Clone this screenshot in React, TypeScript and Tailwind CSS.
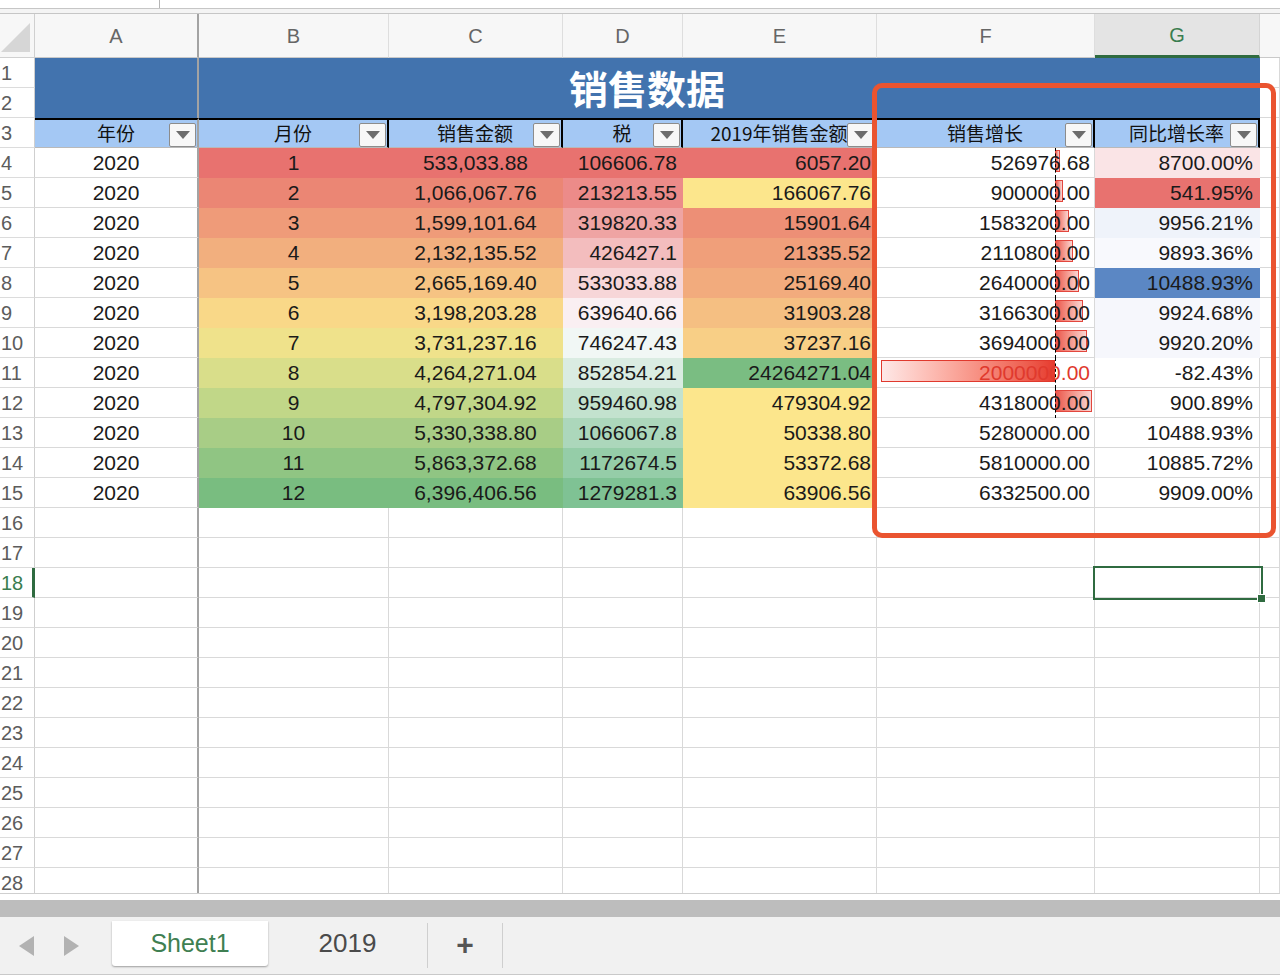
import React from 'react'

const SANS = "font-['Liberation_Sans','Noto_Sans_CJK_SC',sans-serif]"
const CJK = "font-['Noto_Sans_CJK_SC','Liberation_Sans',sans-serif]"

type DataRow = {
  month: string
  sales: string
  bc: string
  tax: string
  dc: string
  y2019: string
  ec: string
  growth: string
  bar?: number
  neg?: boolean
  ratio: string
  gc?: string
}

// 条件格式的颜色直接写死
const rows: DataRow[] = [
  { month: '1', sales: '533,033.88', bc: 'bg-[#e8726f]', tax: '106606.78', dc: 'bg-[#e8726f]', y2019: '6057.20', ec: 'bg-[#e8726f]', growth: '526976.68', bar: 5, ratio: '8700.00%', gc: 'bg-[#fae4e6]' },
  { month: '2', sales: '1,066,067.76', bc: 'bg-[#eb8674]', tax: '213213.55', dc: 'bg-[#ec8b89]', y2019: '166067.76', ec: 'bg-[#fce68c]', growth: '900000.00', bar: 8, ratio: '541.95%', gc: 'bg-[#e8726f]' },
  { month: '3', sales: '1,599,101.64', bc: 'bg-[#ef9b79]', tax: '319820.33', dc: 'bg-[#efa4a3]', y2019: '15901.64', ec: 'bg-[#ed8f76]', growth: '1583200.00', bar: 14, ratio: '9956.21%', gc: 'bg-[#eff3fa]' },
  { month: '4', sales: '2,132,135.52', bc: 'bg-[#f2af7e]', tax: '426427.1', dc: 'bg-[#f3bdbe]', y2019: '21335.52', ec: 'bg-[#f09f7a]', growth: '2110800.00', bar: 18, ratio: '9893.36%', gc: 'bg-[#f8f9fd]' },
  { month: '5', sales: '2,665,169.40', bc: 'bg-[#f6c383]', tax: '533033.88', dc: 'bg-[#f7d6d8]', y2019: '25169.40', ec: 'bg-[#f2ab7d]', growth: '2640000.00', bar: 24, ratio: '10488.93%', gc: 'bg-[#5b87c4]' },
  { month: '6', sales: '3,198,203.28', bc: 'bg-[#f9d888]', tax: '639640.66', dc: 'bg-[#faeff2]', y2019: '31903.28', ec: 'bg-[#f5bf82]', growth: '3166300.00', bar: 28, ratio: '9924.68%', gc: 'bg-[#f6f7fc]' },
  { month: '7', sales: '3,731,237.16', bc: 'bg-[#efe28b]', tax: '746247.43', dc: 'bg-[#f1f7f5]', y2019: '37237.16', ec: 'bg-[#f8cf86]', growth: '3694000.00', bar: 32, ratio: '9920.20%', gc: 'bg-[#f6f7fc]' },
  { month: '8', sales: '4,264,271.04', bc: 'bg-[#d9de8a]', tax: '852854.21', dc: 'bg-[#daece2]', y2019: '24264271.04', ec: 'bg-[#7abd82]', growth: '2000000.00', bar: 174, neg: true, ratio: '-82.43%' },
  { month: '9', sales: '4,797,304.92', bc: 'bg-[#c1d788]', tax: '959460.98', dc: 'bg-[#c3e2ce]', y2019: '479304.92', ec: 'bg-[#fce68c]', growth: '4318000.00', bar: 37, ratio: '900.89%' },
  { month: '10', sales: '5,330,338.80', bc: 'bg-[#a8cd86]', tax: '1066067.8', dc: 'bg-[#acd7bb]', y2019: '50338.80', ec: 'bg-[#fce68c]', growth: '5280000.00', ratio: '10488.93%' },
  { month: '11', sales: '5,863,372.68', bc: 'bg-[#90c583]', tax: '1172674.5', dc: 'bg-[#95cda8]', y2019: '53372.68', ec: 'bg-[#fce68c]', growth: '5810000.00', ratio: '10885.72%' },
  { month: '12', sales: '6,396,406.56', bc: 'bg-[#79bd80]', tax: '1279281.3', dc: 'bg-[#7fc294]', y2019: '63906.56', ec: 'bg-[#fce68c]', growth: '6332500.00', ratio: '9909.00%' },
]

const letters = ['A', 'B', 'C', 'D', 'E', 'F', 'G']

function cell(bg?: string) {
  return bg
    ? `${bg} border-r border-b border-transparent`
    : 'bg-white border-r border-b border-[#d9d9d9]'
}

const colA = 'bg-white border-b border-b-[#d9d9d9] border-r-2 border-r-[#a3a3a3]'

function RowHead({ n, active }: { n: number; active?: boolean }) {
  return (
    <div
      className={`flex items-center bg-white pl-[1px] text-[20px] ${SANS} border-b border-b-[#dcdcdc] ${
        active ? 'border-r-[3px] border-r-[#2f6b40] text-[#3a7d4f]' : 'border-r border-r-[#cfcfcf] text-[#5c5c5c]'
      }`}
    >
      {n}
    </div>
  )
}

function FilterBtn() {
  return (
    <span className="absolute right-[1px] top-[3px] flex h-[24px] w-[27px] items-center justify-center rounded-[2px] border border-[#8c8c8c] bg-[#f7f7f7]">
      <svg width="14" height="8" viewBox="0 0 14 8">
        <path d="M0 0h14L7 8z" fill="#6c6c6c" />
      </svg>
    </span>
  )
}

function HeaderCell({ label, first }: { label: string; first?: boolean }) {
  return (
    <div
      className={`relative flex items-center justify-center bg-[#a4c8f4] border-t-2 border-t-black border-b border-b-[#b9b9b9] text-[19px] text-[#111] ${CJK} ${
        first ? 'border-r-2 border-r-[#a3a3a3]' : 'border-r-2 border-r-black'
      }`}
    >
      <span className="whitespace-nowrap">{label}</span>
      <FilterBtn />
    </div>
  )
}

export default function App() {
  const headers = ['年份', '月份', '销售金额', '税', '2019年销售金额', '销售增长', '同比增长率']

  return (
    <div className={`relative h-[978px] w-[1280px] overflow-hidden bg-white ${SANS}`}>
      {/* 顶部编辑栏 */}
      <div className="h-[8px] w-[160px] border-r border-[#b5b5b5]" />
      <div className="h-[6px] border-y border-[#c6c6c6] bg-[#f4f4f4]" />

      {/* 表格区域 */}
      <div className="relative h-[880px] overflow-hidden border-b border-[#cfcfcf]">
        <div className="grid grid-cols-[35px_164px_190px_174px_120px_194px_218px_165px_1fr] grid-rows-[44px_repeat(28,30px)]">
          {/* 列标题 */}
          <div className="relative border-r border-b border-[#d0d0d0] bg-[#f7f7f7]">
            <svg className="absolute left-0 top-[8px]" width="32" height="32" viewBox="0 0 32 32">
              <path d="M1 30H30V1z" fill="#d6d6d6" />
            </svg>
          </div>
          {letters.map((l, i) => {
            const g = l === 'G'
            return (
              <div
                key={l}
                className={`flex items-center justify-center text-[20px] ${
                  g
                    ? 'bg-[#e4e4e4] text-[#3a7d4f] border-b-[3px] border-b-[#2f6b40] border-r border-r-[#d4d4d4]'
                    : i === 0
                    ? 'bg-[#f7f7f7] text-[#666] border-b border-b-[#c9c9c9] border-r-2 border-r-[#a3a3a3]'
                    : 'bg-[#f7f7f7] text-[#666] border-b border-b-[#c9c9c9] border-r border-r-[#dedede]'
                }`}
              >
                {l}
              </div>
            )
          })}
          <div className="border-b border-[#c9c9c9] bg-[#f7f7f7]" />

          {/* 第1-2行：标题 */}
          <RowHead n={1} />
          <div className="row-span-2 bg-[#4273ae] border-r-2 border-r-[#a3a3a3]" />
          <div className={`col-span-5 row-span-2 flex items-center justify-center pb-[2px] bg-[#4273ae] text-[39px] font-bold text-white ${CJK}`}>
            销售数据
          </div>
          <div className="row-span-2 bg-[#4273ae]" />
          <div className={cell()} />
          <RowHead n={2} />
          <div className={cell()} />

          {/* 第3行：表头 */}
          <RowHead n={3} />
          {headers.map((h, i) => (
            <HeaderCell key={h} label={h} first={i === 0} />
          ))}
          <div className={cell()} />

          {/* 数据行 */}
          {rows.map((r, i) => (
            <React.Fragment key={r.month}>
              <RowHead n={i + 4} />
              <div className={`flex items-center justify-center text-[21px] text-[#1a1a1a] ${colA}`}>2020</div>
              <div className={`flex items-center justify-center text-[21px] text-[#1a1a1a] ${cell(r.bc)}`}>{r.month}</div>
              <div className={`flex items-center justify-center text-[21px] text-[#1a1a1a] ${cell(r.bc)}`}>{r.sales}</div>
              <div className={`flex items-center justify-end pr-[5px] text-[21px] text-[#1a1a1a] ${cell(r.dc)}`}>{r.tax}</div>
              <div className={`flex items-center justify-end pr-[5px] text-[21px] text-[#1a1a1a] ${cell(r.ec)}`}>{r.y2019}</div>
              <div className={`relative flex items-center justify-end pr-[4px] text-[21px] ${r.neg ? 'text-[#e0392d]' : 'text-[#1a1a1a]'} ${cell()}`}>
                {r.bar !== undefined &&
                  (r.neg ? (
                    <span
                      className="absolute left-[4px] top-[2px] h-[22px] border border-[#e0392d] bg-linear-to-r from-[#fde8e7] to-[#e63a2e]"
                      style={{ width: r.bar }}
                    />
                  ) : (
                    <span
                      className="absolute left-[178px] top-[2px] h-[22px] border border-[#e2473e] bg-linear-to-r from-[#e9554b] to-[#f8d5d2]"
                      style={{ width: r.bar }}
                    />
                  ))}
                {r.bar !== undefined && (
                  <span className="absolute left-[178px] top-0 bottom-[-1px] border-l border-dashed border-black" />
                )}
                <span className="relative">{r.growth}</span>
              </div>
              <div className={`flex items-center justify-end pr-[6px] text-[21px] text-[#1a1a1a] ${cell(r.gc)}`}>{r.ratio}</div>
              <div className={cell()} />
            </React.Fragment>
          ))}

          {/* 空行 */}
          {Array.from({ length: 13 }, (_, k) => (
            <React.Fragment key={k}>
              <RowHead n={k + 16} active={k + 16 === 18} />
              <div className={colA} />
              {[0, 1, 2, 3, 4, 5, 6].map(c => (
                <div key={c} className={cell()} />
              ))}
            </React.Fragment>
          ))}
        </div>

        {/* 选中单元格 G18 */}
        <div className="absolute left-[1093px] top-[552px] h-[34px] w-[170px] border-2 border-[#2f6b40]">
          <span className="absolute -bottom-[5px] -right-[5px] h-[9px] w-[9px] border border-white bg-[#2f6b40]" />
        </div>
      </div>

      {/* 水平滚动条 */}
      <div className="mt-[6px] h-[17px] bg-[#bdbdbd]" />

      {/* 工作表标签 */}
      <div className="flex h-[58px] border-b border-[#c9c9c9] bg-[#f1f1f1]">
        <div className="flex w-[112px] items-center gap-[30px] pl-[19px]">
          <svg width="15" height="20" viewBox="0 0 15 20">
            <path d="M15 0V20L0 10z" fill="#b2b2b2" />
          </svg>
          <svg width="15" height="20" viewBox="0 0 15 20">
            <path d="M0 0V20L15 10z" fill="#b2b2b2" />
          </svg>
        </div>
        <div className="mb-[8px] mt-[4px] flex w-[156px] items-center justify-center rounded-b-[3px] bg-white text-[25px] text-[#3f7f52] shadow-[0_1px_2px_rgba(0,0,0,0.35)]">
          Sheet1
        </div>
        <div className="flex w-[159px] items-center justify-center pb-[4px] text-[26px] text-[#4a4a4a]">2019</div>
        <div className="my-[6px] flex w-[76px] items-center justify-center border-x border-[#cfcfcf] pb-[2px] text-[30px] font-bold text-[#555]">
          +
        </div>
      </div>

      {/* 标注框 */}
      <div className="absolute left-[872px] top-[83px] h-[455px] w-[404px] rounded-[10px] border-[5px] border-[#ea5430]" />
    </div>
  )
}
